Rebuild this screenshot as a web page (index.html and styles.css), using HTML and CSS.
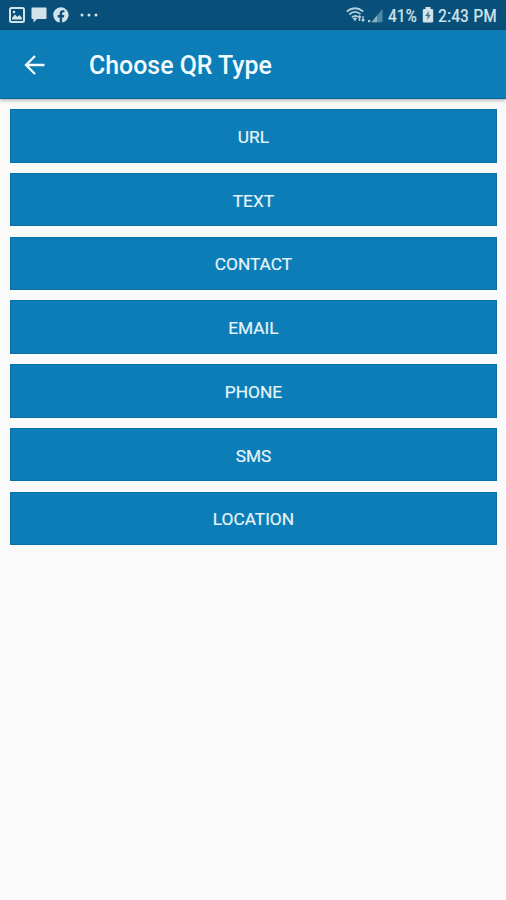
FILE: index.html
```html
<!DOCTYPE html>
<html lang="en">
<head>
<meta charset="utf-8">
<title>Choose QR Type</title>
<link rel="stylesheet" href="styles.css">
</head>
<body>
<div class="status">
  <div class="status-left">
    <svg class="ic-image" width="16" height="16" viewBox="0 0 16 16"><rect x="1" y="1" width="14" height="14" rx="1.500" fill="none" stroke="currentColor" stroke-width="2"/><path d="M3 12.500V11l3-3.500L8.300 10l2.200-2L13 11v1.500z" fill="currentColor"/><circle cx="5" cy="5" r="1.300" fill="currentColor"/></svg>
    <svg class="ic-chat" width="16" height="16" viewBox="0 0 16 16"><path d="M1.500 .5h13a1 1 0 0 1 1 1v9.500a1 1 0 0 1-1 1H6L2.500 15.500V12h-1a1 1 0 0 1-1-1V1.500a1 1 0 0 1 1-1z" fill="currentColor"/></svg>
    <svg class="ic-fb" width="16" height="16" viewBox="0 0 16 16"><path fill="currentColor" d="M8 .3a7.700 7.700 0 0 0-1.300 15.300V10.400H4.700V8.100h2V6.300c0-2 1.200-3.100 3-3.100.9 0 1.700.15 1.700.15v1.950h-1c-1 0-1.300.6-1.300 1.200v1.600h2.200l-.35 2.300H9.100v5.200A7.700 7.700 0 0 0 8 .3z"/></svg>
    <svg class="ic-more" width="18" height="4" viewBox="0 0 18 4" fill="currentColor"><circle cx="2" cy="2" r="1.500"/><circle cx="9" cy="2" r="1.500"/><circle cx="16" cy="2" r="1.500"/></svg>
  </div>
  <div class="status-right">
    <svg class="ic-wifi" width="20" height="16" viewBox="0 0 20 16" fill="none" stroke="currentColor" stroke-width="1.700"><path d="M.8 4.500Q9 -2 17.200 4.500M3.300 7.500Q9 2.500 14.500 7.200M5.800 10.300Q9 7.500 12 9.800"/><path d="M9 14.300L6.700 11.500Q9 9.800 11 11.300z" fill="currentColor" stroke="none"/><path d="M13.500 14V9M12 10.500L13.500 9l1.500 1.500M17 9v5M15.500 12.500L17 14l1.500-1.500" stroke-width="1.300"/></svg>
    <svg class="ic-signal" width="16" height="15" viewBox="0 0 16 15"><rect x="0" y="12" width="2.200" height="2.200" fill="currentColor"/><path d="M3.500 14.200L14.500 1v13.200z" fill="#4d88a4"/><path d="M3.500 14.200L9 7.600V14.200z" fill="#8ab1c3"/></svg>
    <span class="percent">41%</span>
    <svg class="ic-battery" width="12" height="16" viewBox="0 0 12 16"><path d="M3.500 0h5v2H10a1.200 1.200 0 0 1 1.200 1.200v11A1.200 1.200 0 0 1 10 15.400H2A1.200 1.200 0 0 1 .8 14.200v-11A1.200 1.200 0 0 1 2 2h1.500z" fill="currentColor"/><path d="M7 3.800L3.200 9h2.500L5 13l3.900-5.200H6.300z" fill="#3f7592"/></svg>
    <span class="time">2:43 PM</span>
  </div>
</div>
<header class="bar">
  <svg class="back" width="22" height="22" viewBox="0 0 22 22" fill="none" stroke="currentColor" stroke-width="2.300"><path d="M20.500 11H2.500M11 2L2 11l9 9"/></svg>
  <h1 class="title">Choose QR Type</h1>
</header>
<main class="list">
  <button class="item">URL</button>
  <button class="item">TEXT</button>
  <button class="item">CONTACT</button>
  <button class="item">EMAIL</button>
  <button class="item">PHONE</button>
  <button class="item">SMS</button>
  <button class="item">LOCATION</button>
</main>
</body>
</html>
```
FILE: styles.css
```css
* { box-sizing: border-box; }
body {
  margin: 0;
  height: 900px;
  overflow: hidden;
  background: #fafafa;
  font-family: Roboto, "Liberation Sans", sans-serif;
}
svg { display: block; flex: none; }
.status {
  display: flex;
  justify-content: space-between;
  height: 30px;
  padding: 0 9px;
  background: #08507a;
  color: #d3e3ea;
}
.status-left, .status-right { display: flex; align-items: center; }
.ic-chat { margin-left: 6px; }
.ic-fb { margin-left: 6px; }
.ic-more { margin-left: 11px; }
.status-right { white-space: nowrap; }
.ic-wifi { color: #b5cfda; }
.ic-signal { margin-left: 2px; color: #b5cfda; }
.percent, .time {
  font-family: "Roboto Condensed", Roboto, sans-serif;
  font-size: 18px;
  line-height: 30px;
  padding-top: 2px;
  -webkit-text-stroke: 0.2px currentColor;
}
.percent { width: 29px; margin-left: 4px; letter-spacing: -0.1px; }
.ic-battery { margin-left: 5px; }
.time { width: 59px; margin-left: 4px; letter-spacing: 0.05px; }
.bar {
  display: flex;
  align-items: center;
  height: 69px;
  padding: 1px 0 0 24px;
  background: #0d7db7;
  border-bottom: 1px solid #096a9f;
  box-shadow: 0 1px 4px rgba(0, 0, 0, 0.35);
  color: #f2fbff;
}
.title {
  margin: 2px 0 0 43px;
  font-size: 24.900px;
  font-weight: 500;
  line-height: 30px;
  white-space: nowrap;
}
.list {
  display: flex;
  flex-direction: column;
  gap: 10.250px;
  padding: 10px 9.500px 0 10.400px;
}
.item {
  height: 53.500px;
  padding: 2px 0 0;
  border: 1px solid #0a70a7;
  background: #0d7db7;
  color: #e6f5fb;
  font-family: inherit;
  font-size: 17.300px;
  line-height: 22px;
  -webkit-text-stroke: 0.2px currentColor;
}
```
